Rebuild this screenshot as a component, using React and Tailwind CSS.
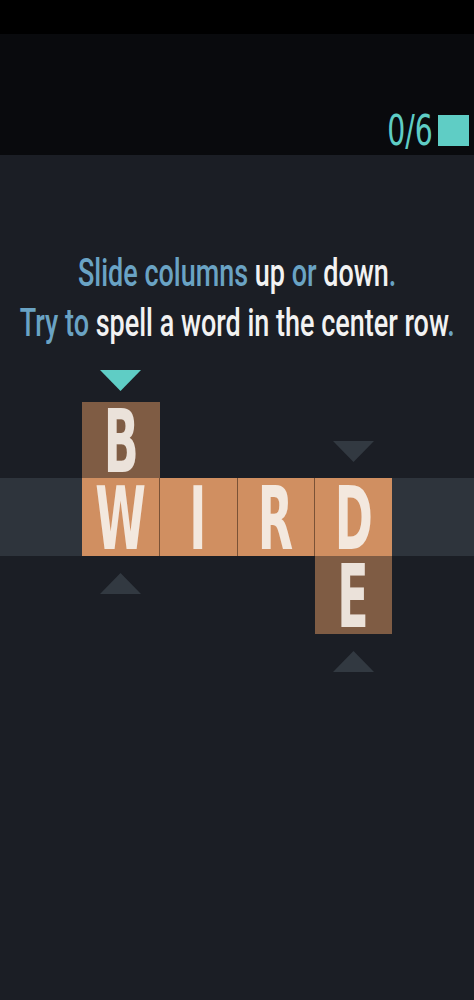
import React from 'react';

const FONT = { fontFamily: '"DejaVu Sans Condensed", "DejaVu Sans", sans-serif' };
const TEXT_FONT = { fontFamily: 'Roboto, "DejaVu Sans Condensed", sans-serif' };

const Arrow = ({ up = false, teal = false }) => (
  <svg width="41" height="21" viewBox="0 0 41 21" className="block">
    <polygon
      points={up ? '20.5,0 41,21 0,21' : '0,0 41,0 20.5,21'}
      fill={teal ? '#5fcdc5' : '#323941'}
    />
  </svg>
);

const Tile = ({ letter, dark = false, h = 'h-[78px]' }) => (
  <div
    className={`${h} w-full flex items-center justify-center ${dark ? 'bg-[#7f5c44]' : 'bg-[#d08f61]'}`}
  >
    <span
      className={`inline-block scale-x-58 text-[88px] font-bold leading-[70px] pt-[3px] ${dark ? 'text-[#ebe2da]' : 'text-[#f3e8de]'}`}
      style={FONT}
    >
      {letter}
    </span>
  </div>
);

export default function App() {
  return (
    <div className="min-h-[1000px] bg-[#1b1e25] overflow-hidden" style={FONT}>
      {/* status bar */}
      <div className="h-[34px] bg-black" />

      {/* header with progress */}
      <div className="h-[121px] bg-[#090a0d] flex items-end justify-end pr-[5px] pb-[9px]">
        <span className="inline-block origin-right scale-x-75 text-[42px] leading-none -mb-[6px] mr-[5px] text-[#5fcdc5]">
          0/6
        </span>
        <div className="w-[31px] h-[31px] bg-[#5fcdc5]" />
      </div>

      {/* instructions */}
      <div className="pt-[93px] text-[38px] leading-[50px] font-medium text-[#f2f2f2]" style={TEXT_FONT}>
        <div className="flex justify-center">
          <span className="inline-block shrink-0 whitespace-nowrap scale-x-71">
            <span className="text-[#6aa3c4]">Slide columns</span> up <span className="text-[#6aa3c4]">or</span> down<span className="text-[#6aa3c4]">.</span>
          </span>
        </div>
        <div className="flex justify-center">
          <span className="inline-block shrink-0 whitespace-nowrap scale-x-71">
            <span className="text-[#6aa3c4]">Try to</span> spell a word in the center row<span className="text-[#6aa3c4]">.</span>
          </span>
        </div>
      </div>

      {/* board */}
      <div className="mt-[21px]">
        {/* upper row */}
        <div className="ml-[82px] grid grid-cols-[repeat(4,77.5px)] items-end h-[109px]">
          <div className="flex flex-col items-center">
            <Arrow teal />
            <div className="w-full mt-[11px]">
              <Tile letter="B" dark h="h-[76px]" />
            </div>
          </div>
          <div />
          <div />
          <div className="flex justify-center pb-[16px]">
            <Arrow />
          </div>
        </div>

        {/* center row band */}
        <div className="h-[78px] bg-[#2e343c]">
          <div className="ml-[82px] w-[310px] h-[78px] grid grid-cols-4 grid-rows-[78px] gap-px bg-[#7a5236]">
            <Tile letter="W" />
            <Tile letter="I" />
            <Tile letter="R" />
            <Tile letter="D" />
          </div>
        </div>

        {/* lower row */}
        <div className="ml-[82px] grid grid-cols-[repeat(4,77.5px)] items-start">
          <div className="flex justify-center pt-[17px]">
            <Arrow up />
          </div>
          <div />
          <div />
          <div className="flex flex-col items-center">
            <Tile letter="E" dark />
            <div className="mt-[17px]">
              <Arrow up />
            </div>
          </div>
        </div>
      </div>
    </div>
  );
}
